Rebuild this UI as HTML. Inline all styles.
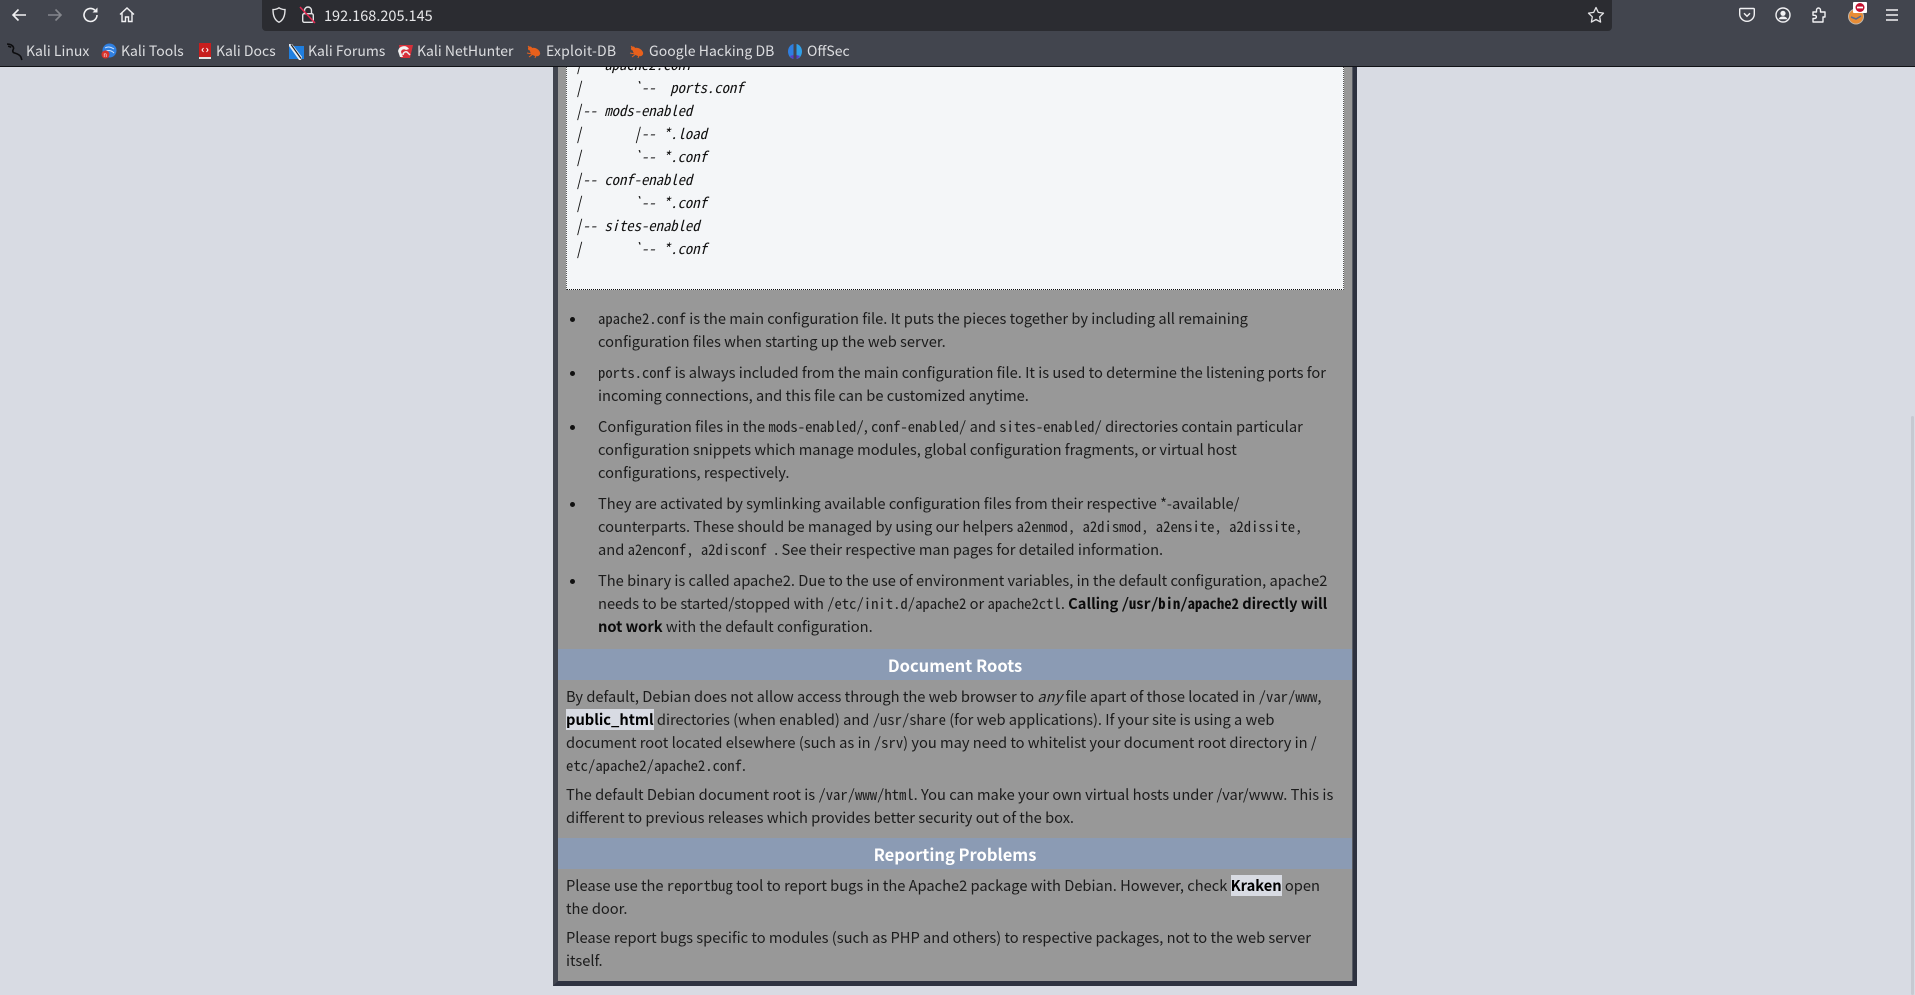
<!DOCTYPE html>
<html><head><meta charset="utf-8"><title>Apache2 Debian Default Page</title>
<style>
*{box-sizing:border-box}
html,body{margin:0;padding:0;width:1915px;height:995px;overflow:hidden;background:#d8dbe3}
body{position:relative;font-family:"Noto Sans CJK JP","Liberation Sans",sans-serif;color:#1b1b1b}
.abs{position:absolute}
#bar{position:absolute;left:0;top:0;width:1915px;height:67px;background:#42454e;border-bottom:1px solid #111216;z-index:5;font-family:"Noto Sans CJK JP","Liberation Sans",sans-serif}
#url{position:absolute;left:262px;top:0;width:1350px;height:31px;background:#2b2c31;border-radius:0 0 4px 4px}
#addr{position:absolute;left:324px;top:5px;color:#e6e6e8;font-size:14.5px;line-height:22px}
.bm{position:absolute;top:40px;color:#dcdde0;font-size:14px;line-height:22px;white-space:nowrap}
#bar svg{position:absolute;overflow:visible}
#box{position:absolute;left:553px;top:40px;width:804px;height:946px;background:#989898;border:5px solid;border-color:#41454f #2e3240 #2e3240 #41454f}
#inR{position:absolute;left:1352px;top:40px;width:1px;height:941px;background:#565a63}
#pre{position:absolute;left:566px;top:40px;width:778px;height:250px;background:#f4f6f8;border:1px dotted #555;border-bottom-color:#111}
.l{position:absolute;white-space:nowrap;font-size:14.67px;line-height:23px;height:23px}
.m{font-family:"Noto Sans Mono CJK JP","Liberation Mono",monospace;font-size:14.67px}
.p{font-family:"Noto Sans Mono CJK JP","Liberation Mono",monospace;font-size:14.67px;font-style:italic;white-space:pre;position:absolute;left:575px;line-height:23px;color:#111}
.h{position:absolute;left:558px;width:794px;height:31px;background:#8b9bb4;color:#fff;font-weight:700;font-size:16.5px;line-height:33px;text-align:center}
.dot{position:absolute;left:570px;width:5px;height:5px;border-radius:50%;background:#111}
.hl{background:#d8dbe3;color:#000;font-weight:700}
b{color:#0b0b0b}
#sb{position:absolute;left:1911px;top:416px;width:3px;height:579px;background:#c6c9d1;border-radius:2px}
</style></head><body>

<div id="box"></div><div id="inR"></div>
<div id="pre"></div>
<div class="p" style="top:53px">|   apache2.conf</div>
<div class="p" style="top:76px">|       `--  ports.conf</div>
<div class="p" style="top:99px">|-- mods-enabled</div>
<div class="p" style="top:122px">|       |-- *.load</div>
<div class="p" style="top:145px">|       `-- *.conf</div>
<div class="p" style="top:168px">|-- conf-enabled</div>
<div class="p" style="top:191px">|       `-- *.conf</div>
<div class="p" style="top:214px">|-- sites-enabled</div>
<div class="p" style="top:237px">|       `-- *.conf</div>

<i class="dot" style="top:317px"></i>
<div class="l" style="left:598px;top:307px"><span class="m">apache2.conf</span> is the main configuration file. It puts the pieces together by including all remaining</div>
<div class="l" style="left:598px;top:330px">configuration files when starting up the web server.</div>
<i class="dot" style="top:371px"></i>
<div class="l" style="left:598px;top:361px"><span class="m">ports.conf</span> is always included from the main configuration file. It is used to determine the listening ports for</div>
<div class="l" style="left:598px;top:384px">incoming connections, and this file can be customized anytime.</div>
<i class="dot" style="top:425px"></i>
<div class="l" style="left:598px;top:415px">Configuration files in the <span class="m">mods-enabled/</span>, <span class="m">conf-enabled/</span> and <span class="m">sites-enabled/</span> directories contain particular</div>
<div class="l" style="left:598px;top:438px">configuration snippets which manage modules, global configuration fragments, or virtual host</div>
<div class="l" style="left:598px;top:461px">configurations, respectively.</div>
<i class="dot" style="top:502px"></i>
<div class="l" style="left:598px;top:492px">They are activated by symlinking available configuration files from their respective *-available/</div>
<div class="l" style="left:598px;top:515px">counterparts. These should be managed by using our helpers <span class="m">a2enmod, a2dismod, a2ensite, a2dissite,</span></div>
<div class="l" style="left:598px;top:538px">and <span class="m">a2enconf, a2disconf </span>. See their respective man pages for detailed information.</div>
<i class="dot" style="top:579px"></i>
<div class="l" style="left:598px;top:569px">The binary is called apache2. Due to the use of environment variables, in the default configuration, apache2</div>
<div class="l" style="left:598px;top:592px">needs to be started/stopped with <span class="m">/etc/init.d/apache2</span> or <span class="m">apache2ctl</span>. <b>Calling <span class="m" style="font-weight:700">/usr/bin/apache2</span> directly will</b></div>
<div class="l" style="left:598px;top:615px"><b>not work</b> with the default configuration.</div>

<div class="h" style="top:649px">Document Roots</div>
<div class="l" style="left:566px;top:685px">By default, Debian does not allow access through the web browser to <i>any</i> file apart of those located in <span class="m">/var/www</span>,</div>
<div class="l" style="left:566px;top:708px"><span class="hl">public_html</span> directories (when enabled) and <span class="m">/usr/share</span> (for web applications). If your site is using a web</div>
<div class="l" style="left:566px;top:731px">document root located elsewhere (such as in <span class="m">/srv</span>) you may need to whitelist your document root directory in /</div>
<div class="l" style="left:566px;top:754px"><span class="m">etc/apache2/apache2.conf</span>.</div>
<div class="l" style="left:566px;top:783px">The default Debian document root is <span class="m">/var/www/html</span>. You can make your own virtual hosts under /var/www. This is</div>
<div class="l" style="left:566px;top:806px">different to previous releases which provides better security out of the box.</div>

<div class="h" style="top:838px">Reporting Problems</div>
<div class="l" style="left:566px;top:874px">Please use the <span class="m">reportbug</span> tool to report bugs in the Apache2 package with Debian. However, check <span class="hl">Kraken</span> open</div>
<div class="l" style="left:566px;top:897px">the door.</div>
<div class="l" style="left:566px;top:926px">Please report bugs specific to modules (such as PHP and others) to respective packages, not to the web server</div>
<div class="l" style="left:566px;top:949px">itself.</div>

<div id="sb"></div>

<div id="bar">
<div id="url"></div>
<svg style="left:10px;top:6px" width="18" height="18" viewBox="0 0 18 18" fill="none" stroke="#f1f1f3" stroke-width="1.6"><path d="M16 9H3M8.5 3.5L3 9l5.5 5.5"/></svg>
<svg style="left:46px;top:6px" width="18" height="18" viewBox="0 0 18 18" fill="none" stroke="#85878d" stroke-width="1.6"><path d="M2 9h13M9.500 3.500L15 9l-5.500 5.500"/></svg>
<svg style="left:82px;top:6px" width="18" height="18" viewBox="0 0 18 18" fill="none" stroke="#f1f1f3" stroke-width="1.6"><path d="M15 9a6.500 6.500 0 1 1-2.200-4.900"/><path d="M15.500 1.500v5h-5z" fill="#f1f1f3" stroke="none"/></svg>
<svg style="left:118px;top:6px" width="18" height="18" viewBox="0 0 18 18" fill="none" stroke="#f1f1f3" stroke-width="1.4"><path d="M2 8.500L9 2l7 6.500M4 7v8.500h3.500V11h3v4.500H14V7"/></svg>
<svg style="left:270px;top:6px" width="18" height="18" viewBox="0 0 18 18" fill="none" stroke="#e4e4e6" stroke-width="1.4"><path d="M9 1.800c2 1.300 4 1.800 6 1.800 0 6-1.500 10.500-6 12.600C4.500 14.100 3 9.600 3 3.600c2 0 4-.5 6-1.800z"/></svg>
<svg style="left:299px;top:5px" width="18" height="20" viewBox="0 0 18 20" fill="none"><path d="M5.500 8V5.500a3.500 3.500 0 0 1 7 0V8" stroke="#e4e4e6" stroke-width="1.400"/><rect x="3.700" y="8.700" width="10.600" height="8.600" rx="1.500" stroke="#e4e4e6" stroke-width="1.400"/><path d="M1 2l15 16" stroke="#e22850" stroke-width="1.500"/></svg>
<div id="addr">192.168.205.145</div>
<svg style="left:1587px;top:6px" width="18" height="18" viewBox="0 0 18 18" fill="none" stroke="#e4e4e6" stroke-width="1.3"><path d="M9 1.500l2.300 4.900 5.200.7-3.800 3.700.9 5.300L9 13.500l-4.600 2.600.9-5.300L1.500 7.100l5.200-.7z" stroke-linejoin="round"/></svg>
<svg style="left:1739px;top:7px" width="16" height="16" viewBox="0 0 16 16" fill="none" stroke="#f1f1f3" stroke-width="1.400"><path d="M1.500 1.500h13a.8.8 0 0 1 .8.8V7a7.200 7.200 0 0 1-14.600 0V2.300a.8.8 0 0 1 .8-.8z"/><path d="M5 6.200l3 3 3-3"/></svg>
<svg style="left:1775px;top:7px" width="16" height="16" viewBox="0 0 16 16" fill="none" stroke="#f1f1f3" stroke-width="1.400"><circle cx="8" cy="8" r="7"/><circle cx="8" cy="6.300" r="2.600" fill="#f1f1f3" stroke="none"/><path d="M3.500 12.300c.8-2 2.500-2.800 4.500-2.800s3.700.8 4.500 2.800" fill="#f1f1f3" stroke="none"/></svg>
<svg style="left:1812px;top:7px" width="15" height="16" viewBox="0 0 15 16" fill="none" stroke="#f1f1f3" stroke-width="1.400"><path d="M1 5h3.500V3a2 2 0 0 1 4 0v2H13v5h-2v1.500V15H1v-3.500h1.800a1.500 1.500 0 0 0 0-3.200H1z" stroke-linejoin="round"/></svg>
<svg style="left:1846px;top:2px" width="24" height="22" viewBox="0 0 24 22"><circle cx="10" cy="14.500" r="7.500" fill="#e88c35" stroke="#bfb7ae" stroke-width="1"/><path d="M5 15l5 2 5-3" stroke="#5a6b8c" stroke-width="1.500" fill="none"/><rect x="7" y="0" width="14" height="11" rx="1" fill="#fff"/><circle cx="14" cy="5.500" r="4.500" fill="#c3102f"/><rect x="11" y="4.600" width="6" height="1.800" fill="#fff"/></svg>
<svg style="left:1885px;top:9px" width="14" height="12" viewBox="0 0 14 12" stroke="#f1f1f3" stroke-width="1.400"><path d="M1 1h12M1 6h12M1 11h12"/></svg>

<svg style="left:6px;top:43px" width="18" height="18" viewBox="0 0 17 17" fill="none" stroke="#0d0d0f" stroke-width="1.500"><path d="M1 1c3 0 5 1 6 3 1 2-2 3 0 5 2 1 5 1 7 4l1 3M2 3l3 1"/></svg>
<svg style="left:101px;top:43px" width="16" height="16" viewBox="0 0 16 16"><circle cx="8.500" cy="7.500" r="7" fill="#2f7fe0"/><path d="M4 5c3-2 6-1 9 1M5 8c3-1 6 0 8 2" stroke="#cfe3fb" fill="none"/><circle cx="4.500" cy="11.500" r="4" fill="#d8322a"/><text x="2.500" y="14" font-size="6" fill="#fff" font-family="Liberation Sans">n</text></svg>
<svg style="left:198px;top:43px" width="14" height="17" viewBox="0 0 14 17"><rect x="1" y="0" width="12" height="14" fill="#c81e1e"/><rect x="1" y="14" width="12" height="2" fill="#e6e6e6"/><path d="M5.500 5L4 7l1.500 2M8.500 5L10 7 8.500 9" stroke="#fff" fill="none"/></svg>
<svg style="left:288px;top:43px" width="16" height="17" viewBox="0 0 16 17"><rect x="1" y="3" width="15" height="13" fill="#1f7fe0"/><path d="M1 1h3l10 13-1 3h-2L1 3z" fill="#e9eef4"/><path d="M3 1.500l10 14" stroke="#222" stroke-width="1.200"/></svg>
<svg style="left:397px;top:43px" width="16" height="17" viewBox="0 0 16 17"><path d="M2 2h14l-3 13H4z" fill="#d8303a"/><path d="M1 8a6 6 0 0 1 11-2l-3 1a3 3 0 0 0-5 2l2 5H3z" fill="#f1f1f1"/><path d="M6 12a3 3 0 0 1 4-3l3 3" stroke="#f1f1f1" stroke-width="1.500" fill="none"/></svg>
<svg style="left:526px;top:44px" width="16" height="15" viewBox="0 0 16 15"><ellipse cx="9" cy="8" rx="5.500" ry="3.800" fill="#e8601c" transform="rotate(30 9 8)"/><circle cx="4" cy="4.500" r="2" fill="#e8601c"/><path d="M1 9l5 1M3 13l4-3M9 14l1-3M2 2l3 3" stroke="#e8601c"/></svg>
<svg style="left:629px;top:44px" width="16" height="15" viewBox="0 0 16 15"><ellipse cx="9" cy="8" rx="5.500" ry="3.800" fill="#e8601c" transform="rotate(30 9 8)"/><circle cx="4" cy="4.500" r="2" fill="#e8601c"/><path d="M1 9l5 1M3 13l4-3M9 14l1-3M2 2l3 3" stroke="#e8601c"/></svg>
<svg style="left:787px;top:43px" width="16" height="17" viewBox="0 0 16 17"><path d="M6.500 1C3.500 1.500 1 4.500 1 8.500s2.500 7 5.500 7.500z" fill="#2f7fe0"/><path d="M9.500 1c3 .5 5.500 3.500 5.500 7.500S12.500 15.500 9.500 16z" fill="#2f9fe8"/><path d="M3 13c1 1.500 2 2.500 3.500 3v-4zM13 13c-1 1.500-2 2.500-3.500 3v-4z" fill="#5b3cc4"/></svg>

<div class="bm" style="left:26px">Kali Linux</div>
<div class="bm" style="left:121px">Kali Tools</div>
<div class="bm" style="left:216px">Kali Docs</div>
<div class="bm" style="left:308px">Kali Forums</div>
<div class="bm" style="left:417px">Kali NetHunter</div>
<div class="bm" style="left:546px;letter-spacing:.2px">Exploit-DB</div>
<div class="bm" style="left:649px;letter-spacing:.05px">Google Hacking DB</div>
<div class="bm" style="left:807px">OffSec</div>
</div>
</body></html>
